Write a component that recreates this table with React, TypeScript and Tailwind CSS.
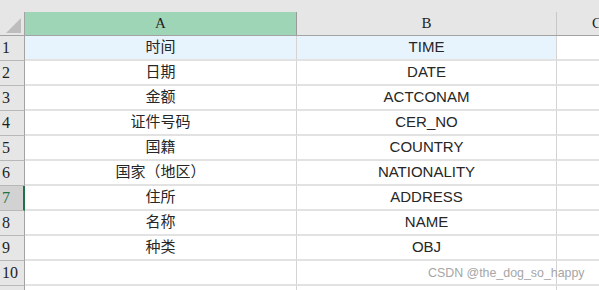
import React from 'react';

const rows = [
  { a: '时间', b: 'TIME' },
  { a: '日期', b: 'DATE' },
  { a: '金额', b: 'ACTCONAM' },
  { a: '证件号码', b: 'CER_NO' },
  { a: '国籍', b: 'COUNTRY' },
  { a: '国家（地区）', b: 'NATIONALITY' },
  { a: '住所', b: 'ADDRESS' },
  { a: '名称', b: 'NAME' },
  { a: '种类', b: 'OBJ' },
  { a: '', b: '' },
  { a: '', b: '' },
];

export default function App() {
  return (
    <div className="relative w-[599px] h-[290px] overflow-hidden bg-white">
      {/* top strip */}
      <div className="h-[12px] bg-[#e6e6e6]" />

      {/* column headers */}
      <div className="flex h-[24px] border-b border-[#a3a3a3] bg-[#e6e6e6] font-['Liberation_Serif',serif] text-[15px] text-[#1f1f1f]">
        <div className="w-[25px] shrink-0 border-r border-[#a3a3a3] flex items-end justify-end pr-[3px] pb-[2px]">
          <svg width="15" height="15" viewBox="0 0 15 15">
            <polygon points="15,0 15,15 0,15" fill="#bdbdbd" />
          </svg>
        </div>
        <div className="w-[272px] shrink-0 bg-[#9fd5b7] border-r border-[#9a9a9a] flex items-center justify-center">
          A
        </div>
        <div className="w-[260px] shrink-0 border-r border-[#c8c8c8] flex items-center justify-center">
          B
        </div>
        <div className="w-[80px] shrink-0 flex items-center justify-center">C</div>
      </div>

      {/* rows */}
      {rows.map((r, i) => {
        const selected = i === 6;
        const active = i === 0;
        return (
          <div key={i} className="flex h-[25px]">
            <div
              className={`w-[25px] shrink-0 border-b border-[#b8b8b8] flex items-center pl-[2px] font-['Liberation_Serif',serif] text-[16px] ${
                selected
                  ? 'bg-[#d2d2d2] border-r-2 border-r-[#217346] text-[#217346]'
                  : 'bg-[#e6e6e6] border-r border-r-[#a3a3a3] text-[#1f1f1f]'
              }`}
            >
              {i < 10 ? i + 1 : ''}
            </div>
            <div
              className={`w-[272px] shrink-0 border-b-2 border-b-[#e2e2e2] border-r border-r-[#d4d4d4] flex items-center justify-center font-['Liberation_Sans','Noto_Sans_CJK_SC',sans-serif] text-[15px] text-[#262626] ${
                active ? 'bg-[#e8f4fd]' : ''
              }`}
            >
              {r.a}
            </div>
            <div
              className={`w-[260px] shrink-0 border-b-2 border-b-[#e2e2e2] border-r border-r-[#d4d4d4] flex items-center justify-center font-['Liberation_Sans','Noto_Sans_CJK_SC',sans-serif] text-[15px] text-[#262626] ${
                active ? 'bg-[#e8f4fd]' : ''
              }`}
            >
              {r.b}
            </div>
            <div className="w-[80px] shrink-0 border-b-2 border-b-[#e2e2e2]" />
          </div>
        );
      })}

      {/* watermark */}
      <div className="absolute left-[428px] top-[265px] font-['Liberation_Sans',sans-serif] text-[12.4px] leading-[16px] text-[#a6a6a6] whitespace-nowrap">
        CSDN @the_dog_so_happy
      </div>
    </div>
  );
}
